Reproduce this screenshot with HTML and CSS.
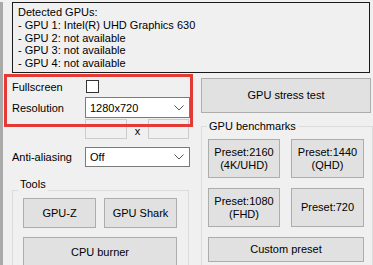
FILE: index.html
```html
<!DOCTYPE html>
<html>
<head>
<meta charset="utf-8">
<link rel="stylesheet" href="styles.css">
</head>
<body>
<div class="win">
  <div class="gpus">Detected GPUs:<br>- GPU 1: Intel(R) UHD Graphics 630<br>- GPU 2: not available<br>- GPU 3: not available<br>- GPU 4: not available</div>
  <div class="main">
    <div class="left">
      <div class="row r1"><span class="lbl">Fullscreen</span><span class="check"></span></div>
      <div class="row r2"><span class="lbl">Resolution</span><div class="select"><span>1280x720</span><svg width="10" height="6" viewBox="0 0 10 6"><path d="M0.5 0.5 L5 5 L9.5 0.5" fill="none" stroke="#555" stroke-width="1"/></svg></div></div>
      <div class="row r3"><span class="edit e1"></span><span class="x">x</span><span class="edit e2"></span></div>
      <div class="row r4"><span class="lbl">Anti-aliasing</span><div class="select"><span>Off</span><svg width="10" height="6" viewBox="0 0 10 6"><path d="M0.5 0.5 L5 5 L9.5 0.5" fill="none" stroke="#555" stroke-width="1"/></svg></div></div>
      <fieldset class="group tools">
        <legend>Tools</legend>
        <div class="tgrid">
          <button class="btn">GPU-Z</button>
          <button class="btn">GPU Shark</button>
          <button class="btn wide">CPU burner</button>
        </div>
      </fieldset>
    </div>
    <div class="right">
      <button class="btn stress">GPU stress test</button>
      <fieldset class="group bench">
        <legend>GPU benchmarks</legend>
        <div class="bgrid">
          <button class="btn preset">Preset:2160<br>(4K/UHD)</button>
          <button class="btn preset">Preset:1440<br>(QHD)</button>
          <button class="btn preset">Preset:1080<br>(FHD)</button>
          <button class="btn preset">Preset:720</button>
          <button class="btn custom">Custom preset</button>
        </div>
      </fieldset>
    </div>
  </div>
  <div class="highlight"></div>
</div>
</body>
</html>
```
FILE: styles.css
```css
html, body {
  margin: 0;
  padding: 0;
  background: #f0f0f0;
}
body {
  width: 373px;
  height: 265px;
  overflow: hidden;
  font-family: "Liberation Sans", Arial, sans-serif;
  font-size: 11px;
  color: #000;
}
.win {
  position: relative;
  width: 373px;
  height: 265px;
  border-left: 3px solid #a9a9a9;
  box-sizing: border-box;
}
.gpus {
  margin: 2px 0 0 9px;
  width: 358px;
  height: 71px;
  box-sizing: border-box;
  border: 1px solid #1a1a1a;
  padding: 3px 5px;
  line-height: 12.8px;
}
.main {
  display: flex;
}
.left {
  width: 194px;
  padding-left: 9px;
  box-sizing: border-box;
}
.row {
  display: flex;
  align-items: center;
}
.lbl {
  width: 73px;
  flex: none;
}
.r1 { margin-top: 3px; height: 21px; }
.r2 { height: 21px; }
.r3 { margin-top: 1px; height: 20px; padding-left: 73px; }
.r4 { margin-top: 8px; height: 20px; }
.check {
  width: 13px;
  height: 13px;
  box-sizing: border-box;
  border: 1px solid #333;
  background: #fff;
  margin-left: 1px;
}
.select {
  width: 105px;
  height: 100%;
  box-sizing: border-box;
  border: 1px solid #7a7a7a;
  background: #fff;
  display: flex;
  align-items: center;
  justify-content: space-between;
  padding: 0 5px 0 4px;
}
.edit {
  height: 20px;
  box-sizing: border-box;
  border: 1px solid #cccccc;
  background: #f0f0f0;
}
.e1 { width: 42px; }
.e2 { width: 41px; }
.x {
  width: 21px;
  text-align: center;
  align-self: flex-start;
  margin-top: 6px;
}
.group {
  margin: 0;
  border: 1px solid #dcdcdc;
  padding: 0;
}
.group legend {
  padding: 0 2px;
  margin-left: 5px;
  line-height: 13px;
}
.tools {
  margin-top: 11px;
  width: 177px;
  box-sizing: border-box;
  height: 100px;
}
.tools legend {
  padding-bottom: 12px;
}
.tgrid {
  display: grid;
  grid-template-columns: 73px 73px;
  column-gap: 8px;
  row-gap: 9px;
  margin-top: -5px;
  padding-left: 10px;
}
.btn {
  font-family: inherit;
  font-size: 11px;
  color: #000;
  background: #e1e1e1;
  border: 1px solid #adadad;
  margin: 0;
  padding: 0;
  line-height: 13px;
}
.tgrid .btn { height: 30px; }
.tgrid .wide { grid-column: 1 / 3; }
.right {
  padding-left: 6px;
}
.stress {
  display: block;
  margin-top: 5px;
  width: 170px;
  height: 35px;
}
.bench {
  margin-top: 7px;
  width: 172px;
  height: 150px;
  box-sizing: border-box;
}
.bgrid {
  display: grid;
  grid-template-columns: 72px 73px;
  column-gap: 11px;
  row-gap: 10px;
  padding: 6px 0 0 6px;
}
.preset { height: 39px; }
.custom { grid-column: 1 / 3; height: 25px; }
.highlight {
  position: absolute;
  left: 1px;
  top: 72px;
  width: 189px;
  height: 53px;
  box-sizing: border-box;
  border: 3px solid #e53935;
}
```
